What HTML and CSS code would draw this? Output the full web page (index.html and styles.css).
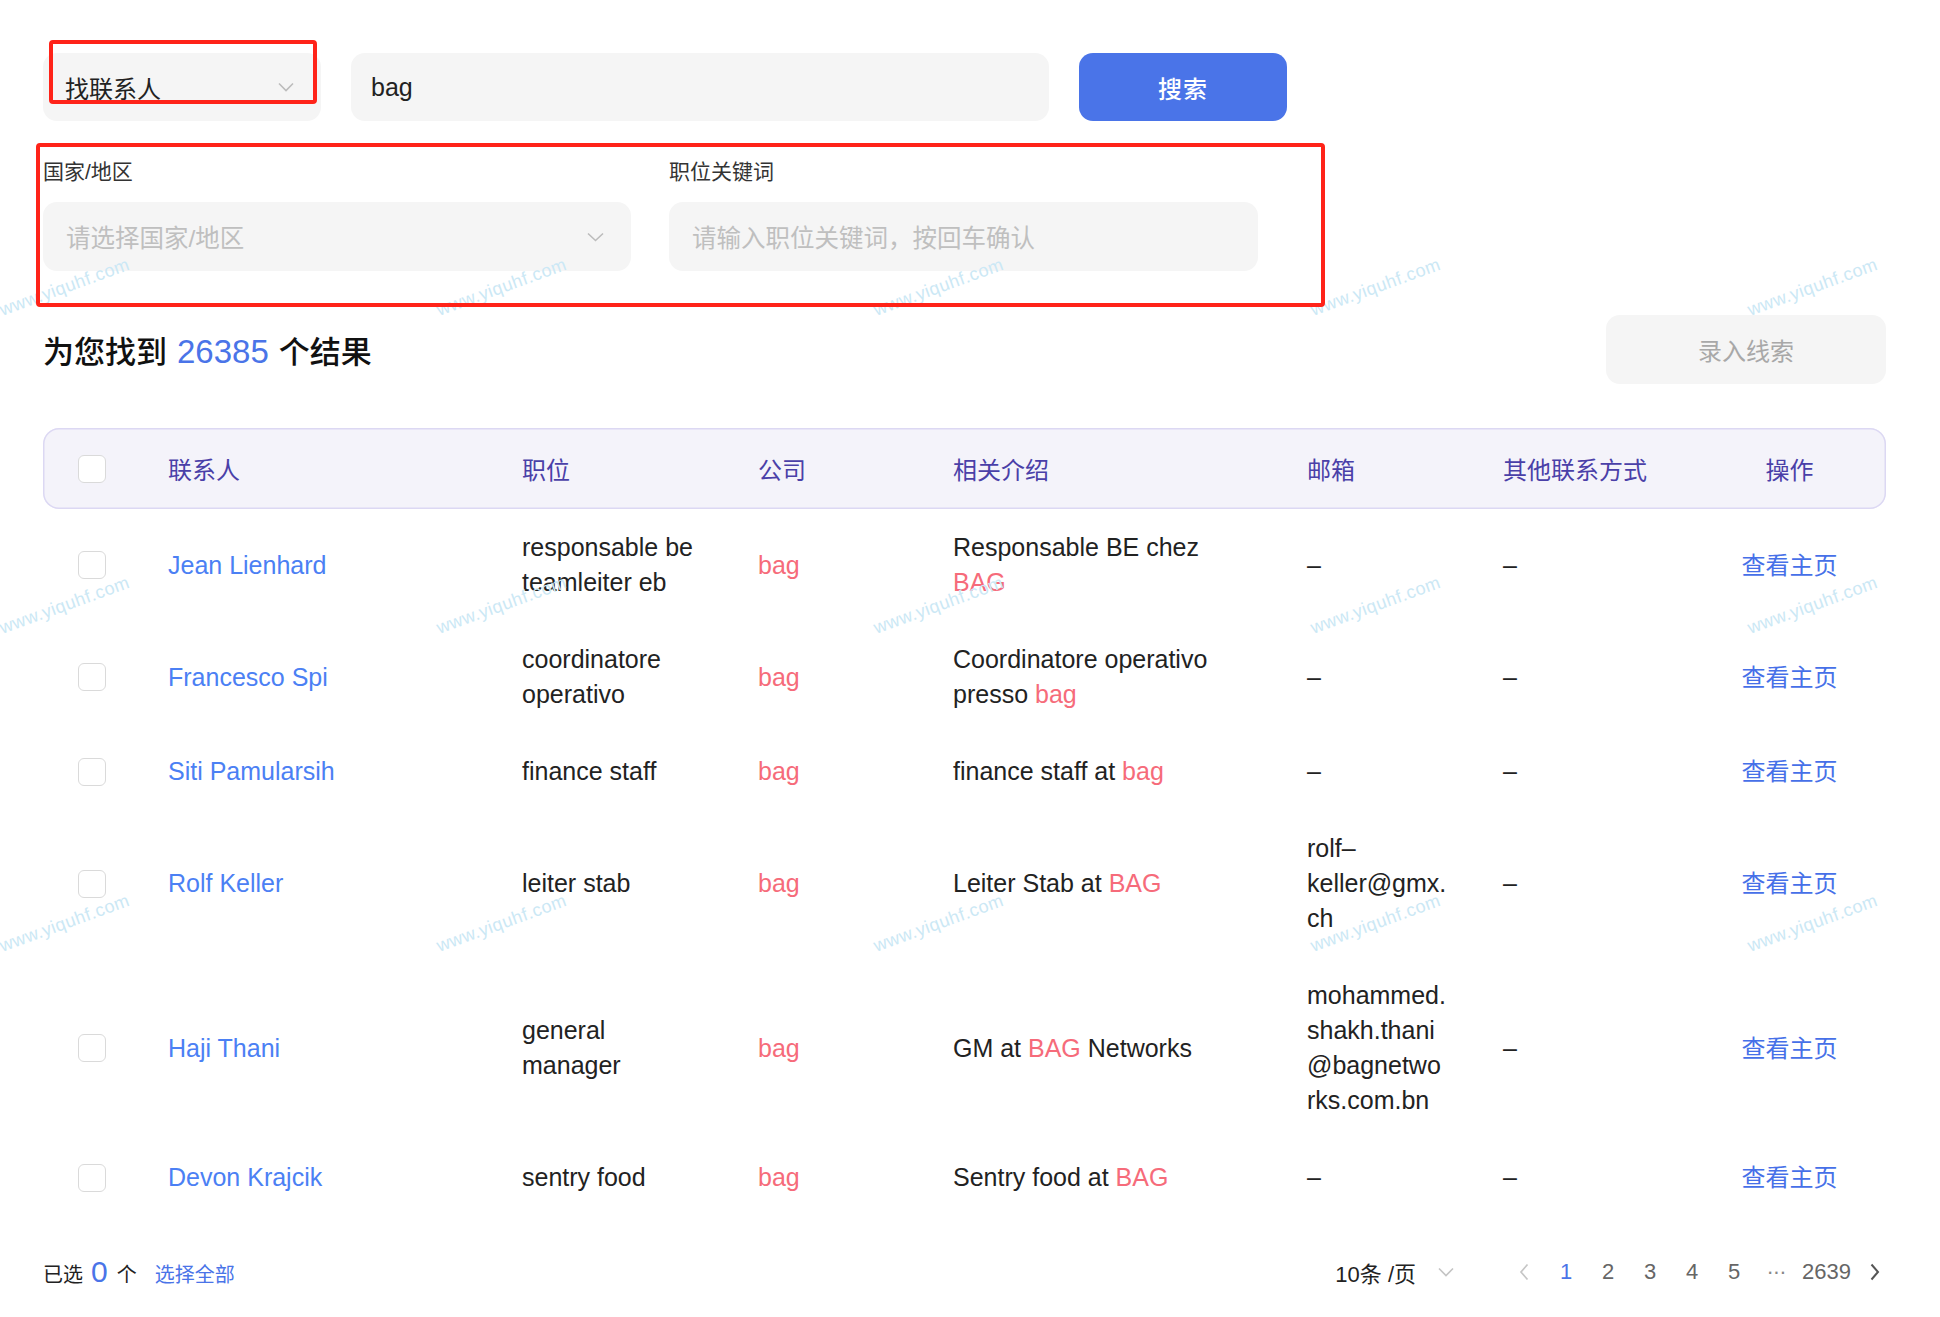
FILE: index.html
```html
<!DOCTYPE html>
<html lang="zh-CN">
<head>
<meta charset="utf-8">
<title>找联系人</title>
<link rel="stylesheet" href="styles.css">
</head>
<body>
<div class="page">
  <div class="search-bar">
    <div class="field type-select">
      <span>找联系人</span>
      <svg class="chev" width="16" height="10" viewBox="0 0 16 10"><path d="M1 1.5 L8 8.5 L15 1.5" fill="none" stroke="#bcbcbc" stroke-width="1.6"/></svg>
    </div>
    <div class="field kw">bag</div>
    <div class="btn-search">搜索</div>
  </div>

  <div class="filters">
    <div class="filter country">
      <label>国家/地区</label>
      <div class="field">
        <span>请选择国家/地区</span>
        <svg class="chev" width="17" height="10" viewBox="0 0 17 10"><path d="M1 1.5 L8.5 8.5 L16 1.5" fill="none" stroke="#bcbcbc" stroke-width="1.6"/></svg>
      </div>
    </div>
    <div class="filter position">
      <label>职位关键词</label>
      <div class="field"><span>请输入职位关键词，按回车确认</span></div>
    </div>
  </div>

  <div class="results-bar">
    <div class="results-title">为您找到<span class="num">26385</span>个结果</div>
    <div class="btn-lead">录入线索</div>
  </div>

  <div class="table">
    <div class="thead">
      <div class="c-check"><span class="checkbox"></span></div>
      <div>联系人</div>
      <div>职位</div>
      <div>公司</div>
      <div>相关介绍</div>
      <div>邮箱</div>
      <div>其他联系方式</div>
      <div class="c-act">操作</div>
    </div>

    <div class="row">
      <div class="c-check"><span class="checkbox"></span></div>
      <div class="name">Jean Lienhard</div>
      <div class="c-title">responsable be teamleiter eb</div>
      <div class="hl">bag</div>
      <div class="c-intro">Responsable BE chez <span class="hl">BAG</span></div>
      <div class="c-mail">–</div>
      <div>–</div>
      <div class="c-act"><span class="act">查看主页</span></div>
    </div>

    <div class="row">
      <div class="c-check"><span class="checkbox"></span></div>
      <div class="name">Francesco Spi</div>
      <div class="c-title">coordinatore operativo</div>
      <div class="hl">bag</div>
      <div class="c-intro">Coordinatore operativo presso <span class="hl">bag</span></div>
      <div class="c-mail">–</div>
      <div>–</div>
      <div class="c-act"><span class="act">查看主页</span></div>
    </div>

    <div class="row">
      <div class="c-check"><span class="checkbox"></span></div>
      <div class="name">Siti Pamularsih</div>
      <div class="c-title">finance staff</div>
      <div class="hl">bag</div>
      <div class="c-intro">finance staff at <span class="hl">bag</span></div>
      <div class="c-mail">–</div>
      <div>–</div>
      <div class="c-act"><span class="act">查看主页</span></div>
    </div>

    <div class="row">
      <div class="c-check"><span class="checkbox"></span></div>
      <div class="name">Rolf Keller</div>
      <div class="c-title">leiter stab</div>
      <div class="hl">bag</div>
      <div class="c-intro">Leiter Stab at <span class="hl">BAG</span></div>
      <div class="c-mail">rolf–keller@gmx.ch</div>
      <div>–</div>
      <div class="c-act"><span class="act">查看主页</span></div>
    </div>

    <div class="row">
      <div class="c-check"><span class="checkbox"></span></div>
      <div class="name">Haji Thani</div>
      <div class="c-title">general manager</div>
      <div class="hl">bag</div>
      <div class="c-intro">GM at <span class="hl">BAG</span> Networks</div>
      <div class="c-mail">mohammed.shakh.thani@bagnetworks.com.bn</div>
      <div>–</div>
      <div class="c-act"><span class="act">查看主页</span></div>
    </div>

    <div class="row">
      <div class="c-check"><span class="checkbox"></span></div>
      <div class="name">Devon Krajcik</div>
      <div class="c-title">sentry food</div>
      <div class="hl">bag</div>
      <div class="c-intro">Sentry food at <span class="hl">BAG</span></div>
      <div class="c-mail">–</div>
      <div>–</div>
      <div class="c-act"><span class="act">查看主页</span></div>
    </div>
  </div>

  <div class="footer">
    <div class="selected">
      <span>已选</span><span class="count">0</span><span>个</span><span class="select-all">选择全部</span>
    </div>
    <div class="pager-wrap">
      <div class="sizer">
        <span>10条 /页</span>
        <svg width="16" height="10" viewBox="0 0 16 10"><path d="M1 1.5 L8 8.5 L15 1.5" fill="none" stroke="#c4c4c4" stroke-width="1.6"/></svg>
      </div>
      <div class="pager">
        <span class="arrow"><svg width="10" height="18" viewBox="0 0 10 18"><path d="M8.5 1.5 L2 9 L8.5 16.5" fill="none" stroke="#c6c6c6" stroke-width="1.7"/></svg></span>
        <span class="cur">1</span>
        <span>2</span>
        <span>3</span>
        <span>4</span>
        <span>5</span>
        <span class="dots">···</span>
        <span>2639</span>
        <span class="arrow next"><svg width="10" height="18" viewBox="0 0 10 18"><path d="M1.5 1.5 L8 9 L1.5 16.5" fill="none" stroke="#555" stroke-width="2"/></svg></span>
      </div>
    </div>
  </div>

  <div class="watermarks">
    <div class="wm">www.yiquhf.com</div><div class="wm">www.yiquhf.com</div><div class="wm">www.yiquhf.com</div><div class="wm">www.yiquhf.com</div><div class="wm">www.yiquhf.com</div>
    <div class="wm">www.yiquhf.com</div><div class="wm">www.yiquhf.com</div><div class="wm">www.yiquhf.com</div><div class="wm">www.yiquhf.com</div><div class="wm">www.yiquhf.com</div>
    <div class="wm">www.yiquhf.com</div><div class="wm">www.yiquhf.com</div><div class="wm">www.yiquhf.com</div><div class="wm">www.yiquhf.com</div><div class="wm">www.yiquhf.com</div>
  </div>

  <div class="mark mark-1"></div>
  <div class="mark mark-2"></div>
</div>
</body>
</html>
```

FILE: styles.css
```css
* { box-sizing: border-box; margin: 0; padding: 0; }
body {
  margin: 0;
  background: #fff;
  font-family: "Liberation Sans", "Noto Sans CJK SC", sans-serif;
  color: #222;
}
.page {
  position: relative;
  width: 1940px;
  min-height: 1317px;
  padding: 53px 54px 0 43px;
  overflow: hidden;
}

/* search bar */
.search-bar { display: flex; gap: 30px; height: 68px; }
.field {
  background: #f5f5f5;
  border-radius: 14px;
  display: flex;
  align-items: center;
  height: 100%;
}
.type-select {
  width: 278px;
  padding: 0 27px 0 22px;
  justify-content: space-between;
  font-size: 24px;
  color: #222;
}
.kw { width: 698px; padding-left: 20px; font-size: 25px; color: #222; }
.btn-search {
  width: 208px;
  height: 68px;
  border-radius: 14px;
  background: #4a74e8;
  color: #fff;
  font-size: 24px;
  font-weight: 500;
  display: flex;
  align-items: center;
  justify-content: center;
  letter-spacing: 1px;
}

/* filters */
.filters { display: flex; gap: 38px; margin-top: 36px; }
.filter label { display: block; font-size: 21px; line-height: 29px; color: #333; margin-bottom: 16px; }
.filter .field { height: 69px; font-size: 24.5px; color: #bfbfbf; padding: 0 27px 0 23px; }
.country .field { width: 588px; justify-content: space-between; }
.position .field { width: 589px; }

/* results */
.results-bar {
  display: flex;
  justify-content: space-between;
  align-items: center;
  margin-top: 44px;
  height: 69px;
}
.results-title { font-size: 31px; font-weight: 500; color: #111; }
.results-title .num { color: #4a74e8; font-size: 33px; font-weight: 400; margin: 0 10px 0 10px; }
.btn-lead {
  width: 280px;
  height: 69px;
  border-radius: 14px;
  background: #f5f5f5;
  color: #a8a8a8;
  font-size: 24px;
  display: flex;
  align-items: center;
  justify-content: center;
}

/* table */
.table { margin-top: 44px; }
.thead, .row {
  display: grid;
  grid-template-columns: 125px 354px 236px 195px 354px 196px 190px 193px;
  align-items: center;
}
.thead {
  height: 81px;
  background: #f4f3fa;
  border-radius: 16px;
  box-shadow: inset 0 0 0 1.5px #dcd8f3;
  font-size: 24px;
  color: #4a40a8;
}
.row { padding: 21px 0; font-size: 25px; line-height: 35px; color: #222; }
.c-check { padding-left: 35px; display: flex; }
.checkbox {
  display: block;
  width: 28px;
  height: 28px;
  border: 1.5px solid #dadada;
  border-radius: 6px;
  background: #fff;
}
.c-title { padding-right: 56px; }
.c-intro { padding-right: 64px; }
.c-mail { padding-right: 55px; overflow-wrap: anywhere; }
.c-act { text-align: center; }
.name { color: #4b80f4; }
.hl { color: #f66b7a; }
.act { color: #4670e8; font-size: 24px; }

/* footer */
.footer {
  display: flex;
  justify-content: space-between;
  align-items: center;
  margin-top: 36px;
  height: 40px;
}
.selected { display: flex; align-items: baseline; font-size: 20px; color: #222; }
.selected .count { font-size: 30px; color: #4a74e8; margin: 0 9px 0 8px; }
.select-all { color: #4a74e8; margin-left: 18px; }
.pager-wrap { display: flex; align-items: center; }
.sizer { display: flex; align-items: center; gap: 22px; font-size: 22px; color: #222; }
.pager { display: flex; align-items: center; gap: 10px; margin-left: 54px; font-size: 22px; color: #666; }
.pager span { min-width: 32px; text-align: center; }
.pager .arrow { display: flex; justify-content: center; align-items: center; }
.pager .next { min-width: 22px; margin-left: 3px; }
.pager .cur { color: #4a74e8; }
.pager .dots { color: #888; letter-spacing: -1px; }

/* watermark overlay */
.watermarks {
  position: absolute;
  left: -154px;
  top: 128px;
  display: grid;
  grid-template-columns: repeat(5, 437px);
  grid-auto-rows: 318px;
  pointer-events: none;
  z-index: 5;
}
.wm {
  display: flex;
  align-items: center;
  justify-content: center;
  transform: rotate(-20deg);
  color: #cbe8f5;
  font-size: 18px;
  letter-spacing: 0.5px;
}

/* annotation boxes */
.mark {
  position: absolute;
  border: 4px solid #ff2319;
  border-radius: 4px;
  pointer-events: none;
  z-index: 6;
}
.mark-1 { left: 49px; top: 40px; width: 268px; height: 64px; }
.mark-2 { left: 36px; top: 143px; width: 1289px; height: 164px; }
```
